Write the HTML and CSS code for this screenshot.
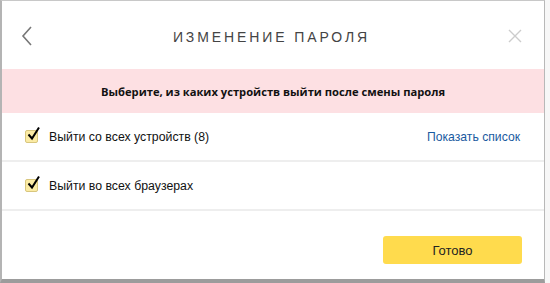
FILE: index.html
```html
<!DOCTYPE html>
<html lang="ru">
<head>
    <meta charset="UTF-8">
    <meta name="viewport" content="width=device-width, initial-scale=1.0">
    <title>Изменение пароля</title>
    <link rel="stylesheet" href="styles.css">
</head>
<body>
    <div class="page">
        <div class="dialog">
            <div class="header">
                <span class="back">
                    <svg width="12" height="20" viewBox="0 0 12 20"><path d="M10 1 L2 10 L10 19" fill="none" stroke="#777" stroke-width="1.6"/></svg>
                </span>
                <h2>Изменение пароля</h2>
                <span class="close">
                    <svg width="14" height="14" viewBox="0 0 14 14"><path d="M1 1 L13 13 M13 1 L1 13" fill="none" stroke="#ccc" stroke-width="1.4"/></svg>
                </span>
            </div>
            <div class="notice">Выберите, из каких устройств выйти после смены пароля</div>
            <div class="row">
                <label class="check">
                    <span class="box"><svg width="16" height="16" viewBox="0 0 16 16"><path d="M2.5 8.5 L6 12.5 L13 1.5" fill="none" stroke="#000" stroke-width="2"/></svg></span>
                    Выйти со всех устройств (8)
                </label>
                <a href="#" class="link">Показать список</a>
            </div>
            <div class="row">
                <label class="check">
                    <span class="box"><svg width="16" height="16" viewBox="0 0 16 16"><path d="M2.5 8.5 L6 12.5 L13 1.5" fill="none" stroke="#000" stroke-width="2"/></svg></span>
                    Выйти во всех браузерах
                </label>
            </div>
            <div class="footer">
                <button>Готово</button>
            </div>
        </div>
        <div class="side"></div>
    </div>
</body>
</html>
```

FILE: styles.css
```css
body {
    margin: 0;
    padding: 0;
    font-family: 'Liberation Sans', Arial, sans-serif;
    background: #fff;
    color: #000;
}
.page {
    display: flex;
    width: 550px;
    height: 283px;
}
.dialog {
    width: 542px;
    height: 278px;
    background: #fff;
    border-top: 1px solid #c8c8c8;
    border-left: 2px solid #b4b4b4;
    border-right: 1px solid #b8b8b8;
    border-bottom: 4px solid #9c9c9c;
    box-sizing: content-box;
    display: flex;
    flex-direction: column;
}
.side {
    flex: 1;
    background: #f7f7f7;
}
.header {
    height: 68px;
    display: flex;
    align-items: center;
    padding: 0 22px 0 19px;
}
.back {
    width: 14px;
    display: flex;
    margin-top: 2px;
}
.close {
    width: 14px;
    display: flex;
    margin-top: 2px;
}
h2 {
    flex: 1;
    margin: 0;
    text-align: center;
    font-size: 14px;
    font-weight: normal;
    letter-spacing: 2.9px;
    text-transform: uppercase;
    color: #444;
    padding-top: 4px;
}
.notice {
    height: 44px;
    background: #fde0e3;
    display: flex;
    align-items: center;
    justify-content: center;
    font-family: 'Open Sans', sans-serif;
    font-weight: bold;
    font-size: 11.2px;
    color: #111;
}
.row {
    height: 47px;
    border-bottom: 2px solid #eeeeee;
    display: flex;
    align-items: center;
    justify-content: space-between;
    padding: 0 24px 0 23px;
}
.check {
    display: flex;
    align-items: center;
    font-size: 12.3px;
    color: #111;
}
.box {
    position: relative;
    width: 11px;
    height: 11px;
    background: #fbeba4;
    border: 1px solid #d8c67e;
    border-radius: 2px;
    margin-right: 11px;
}
.box svg {
    position: absolute;
    left: 0;
    top: -5px;
}
.link {
    color: #1a5aa0;
    font-size: 12.2px;
    text-decoration: none;
}
.footer {
    flex: 1;
    display: flex;
    justify-content: flex-end;
    align-items: flex-start;
    padding: 25px 22px 0 0;
}
button {
    width: 139px;
    height: 28px;
    background: #ffdb4d;
    border: none;
    border-radius: 3px;
    font-family: 'Liberation Sans', Arial, sans-serif;
    font-size: 13px;
    color: #222;
}
```
